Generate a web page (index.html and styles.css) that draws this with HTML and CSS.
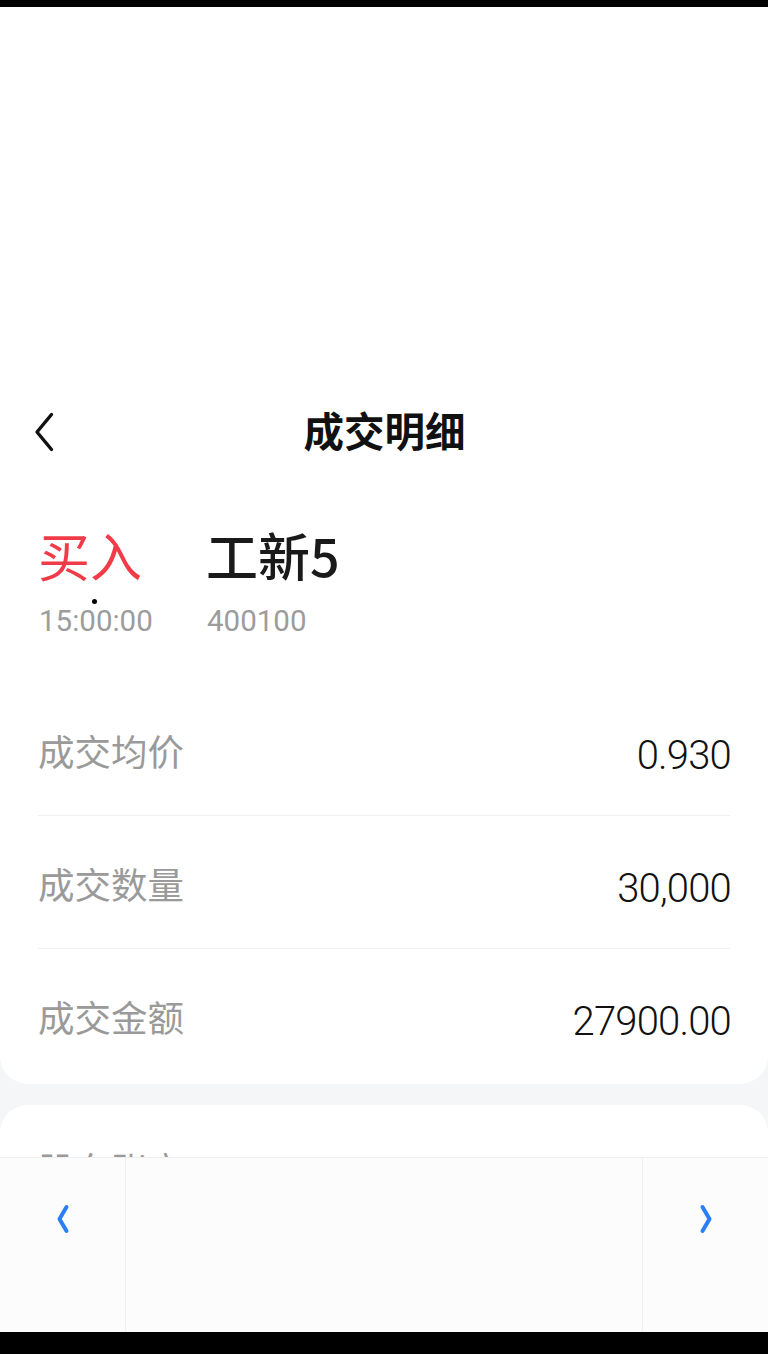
FILE: index.html
```html
<!DOCTYPE html>
<html lang="zh-CN">
<head>
<meta charset="utf-8">
<title>成交明细</title>
<link rel="stylesheet" href="styles.css">
</head>
<body>
<div class="topbar"></div>
<div class="card main">
  <div class="spacer"></div>
  <header class="header">
    <div class="back">
      <svg width="22" height="42" viewBox="0 0 22 42"><path d="M18.5 3.5 L4 21 L18.5 38.5" fill="none" stroke="#111" stroke-width="3.4" stroke-linecap="round" stroke-linejoin="round"/></svg>
    </div>
    <h1 class="title">成交明细</h1>
    <div></div>
  </header>
  <section class="info">
    <div class="info-grid">
      <div class="side">买入</div>
      <div class="name">工新5</div>
      <div class="sub">15:00:00</div>
      <div class="sub">400100</div>
    </div>
    <span class="dot"></span>
  </section>
  <section class="rows">
    <div class="row"><span class="label">成交均价</span><span class="value">0.930</span></div>
    <div class="row"><span class="label">成交数量</span><span class="value">30,000</span></div>
    <div class="row"><span class="label">成交金额</span><span class="value">27900.00</span></div>
  </section>
</div>
<div class="card second">
  <div class="label">股东账户</div>
</div>
<nav class="toolbar">
  <div class="cell left">
    <svg width="16" height="30" viewBox="0 0 16 30"><path d="M11.5 3 L4.5 15 L11.5 27" fill="none" stroke="#2b7ef5" stroke-width="4" stroke-linecap="round" stroke-linejoin="round"/></svg>
  </div>
  <div class="cell mid"></div>
  <div class="cell right">
    <svg width="16" height="30" viewBox="0 0 16 30"><path d="M4.5 3 L11.5 15 L4.5 27" fill="none" stroke="#2b7ef5" stroke-width="4" stroke-linecap="round" stroke-linejoin="round"/></svg>
  </div>
</nav>
<div class="bottombar"></div>
</body>
</html>
```
FILE: styles.css
```css
html, body {
  margin: 0;
  padding: 0;
}
body {
  width: 768px;
  height: 1354px;
  overflow: hidden;
  background: #f5f6f8;
  font-family: "Noto Sans CJK SC", "Noto Sans", sans-serif;
  position: relative;
}
.topbar {
  height: 7px;
  background: #000;
}
.card {
  background: #fff;
}
.main {
  border-radius: 0 0 28px 28px;
  padding-bottom: 3px;
}
.spacer {
  height: 391px;
}
.header {
  height: 68px;
  display: grid;
  grid-template-columns: 1fr auto 1fr;
  align-items: center;
  padding: 0 33px;
}
.back {
  display: flex;
  align-items: center;
  height: 68px;
}
.back svg {
  display: block;
}
.title {
  margin: 0 0 4px 1px;
  font-size: 40.5px;
  font-weight: 700;
  line-height: 60px;
  color: #111;
}
.info {
  position: relative;
  padding: 59px 38px 0;
}
.info-grid {
  display: grid;
  grid-template-columns: 168px auto;
  grid-template-rows: 60px 40px;
  row-gap: 16px;
}
.side {
  font-size: 52px;
  line-height: 60px;
  color: #f03c48;
}
.name {
  font-size: 52px;
  line-height: 60px;
  font-weight: 500;
  color: #1a1a1a;
}
.sub {
  font-family: Roboto, "Noto Sans", sans-serif;
  font-size: 29.5px;
  line-height: 40px;
  font-weight: 400;
  color: #9c9c9c;
  margin-left: 1px;
}
.dot {
  position: absolute;
  left: 92px;
  top: 133px;
  width: 5px;
  height: 5px;
  border-radius: 50%;
  background: #000;
}
.rows {
  margin-top: 42px;
  padding: 0 38px;
}
.row {
  height: 132px;
  display: flex;
  justify-content: space-between;
  align-items: center;
  border-bottom: 1px solid #f0f0f0;
}
.row:last-child {
  border-bottom: none;
}
.label {
  font-size: 36.5px;
  line-height: 44px;
  color: #9a9a9a;
  margin-top: 3px;
}
.value {
  font-family: Roboto, "Noto Sans", sans-serif;
  font-size: 40px;
  line-height: 48px;
  font-weight: 300;
  letter-spacing: -0.8px;
  color: #111;
  margin-top: 13px;
  margin-right: -1px;
}
.second {
  margin-top: 21px;
  border-radius: 28px 28px 0 0;
  height: 260px;
  padding: 42px 38px 0;
}
.second .label {
  margin-top: 0;
}
.toolbar {
  position: absolute;
  left: 0;
  right: 0;
  bottom: 22px;
  height: 174px;
  display: flex;
  background: #fcfcfc;
  border-top: 1px solid #efefef;
}
.cell {
  display: flex;
  justify-content: center;
  align-items: flex-start;
  padding-top: 46px;
}
.left {
  width: 125px;
  border-right: 1px solid #f0f0f0;
}
.mid {
  flex: 1;
}
.right {
  width: 125px;
  border-left: 1px solid #f0f0f0;
}
.cell svg {
  display: block;
}
.bottombar {
  position: absolute;
  left: 0;
  right: 0;
  bottom: 0;
  height: 22px;
  background: #000;
}
```
